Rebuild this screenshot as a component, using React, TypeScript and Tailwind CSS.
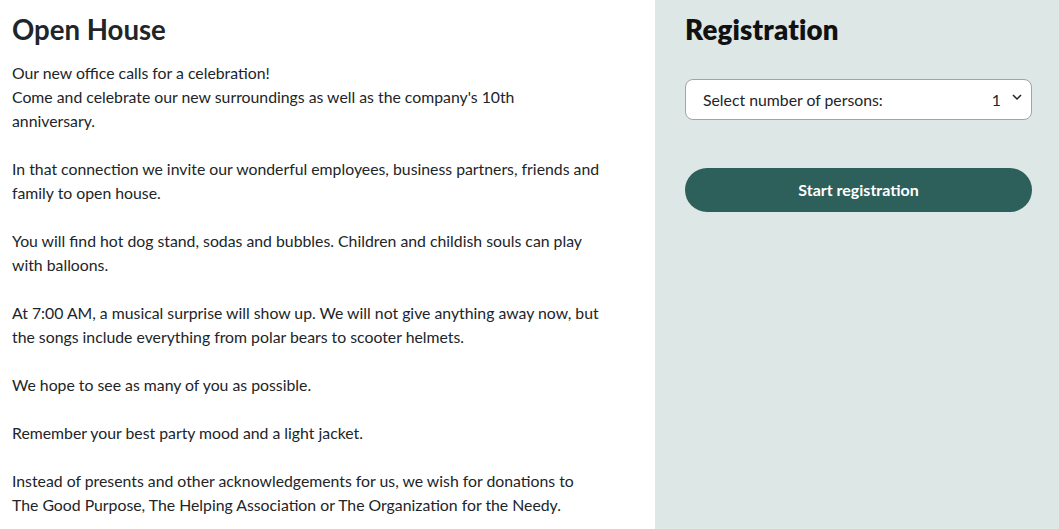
import React from "react";

export default function App() {
  const lines: string[] = [
    "Our new office calls for a celebration!",
    "Come and celebrate our new surroundings as well as the company's 10th",
    "anniversary.",
    "",
    "In that connection we invite our wonderful employees, business partners, friends and",
    "family to open house.",
    "",
    "You will find hot dog stand, sodas and bubbles. Children and childish souls can play",
    "with balloons.",
    "",
    "At 7:00 AM, a musical surprise will show up. We will not give anything away now, but",
    "the songs include everything from polar bears to scooter helmets.",
    "",
    "We hope to see as many of you as possible.",
    "",
    "Remember your best party mood and a light jacket.",
    "",
    "Instead of presents and other acknowledgements for us, we wish for donations to",
    "The Good Purpose, The Helping Association or The Organization for the Needy.",
  ];
  return (
    <div
      className="flex h-[529px] w-full overflow-hidden bg-white text-[#212529]"
      style={{ fontFamily: "Lato, 'Noto Sans', sans-serif" }}
    >
      <div className="flex-1 px-3 pt-[13px]">
        <h1 className="text-[27.6px] font-bold leading-[34px]">Open House</h1>
        <div className="mt-[14px] text-[15.8px] leading-[24px]">
          {lines.map((l, i) =>
            l === "" ? (
              <div key={i} className="h-[24px]" />
            ) : (
              <p key={i} className="whitespace-nowrap">
                {l}
              </p>
            )
          )}
        </div>
      </div>
      <div className="w-[404px] shrink-0 bg-[#dde7e5] pl-[30px] pr-[27px] pt-[13px]">
        <h2 className="text-[27.6px] font-extrabold leading-[34px] tracking-[0.2px] text-[#111]">Registration</h2>
        <div className="mt-[32px] flex h-[41px] items-center rounded-[8px] border border-[#a3a3a3] bg-white pl-[17px] pr-[9px] text-[15.8px]">
          <span className="flex-1">Select number of persons:</span>
          <span className="mr-[11px]">1</span>
          <svg width="10" height="6" viewBox="0 0 10 6" className="mb-[6px] overflow-visible">
            <path d="M1 1 L5 5 L9 1" fill="none" stroke="#222" strokeWidth="1.5" />
          </svg>
        </div>
        <button className="mt-[48px] flex h-[44px] w-full items-center justify-center rounded-full bg-[#2d605a] text-[16px] font-bold text-white">
          Start registration
        </button>
      </div>
    </div>
  );
}
